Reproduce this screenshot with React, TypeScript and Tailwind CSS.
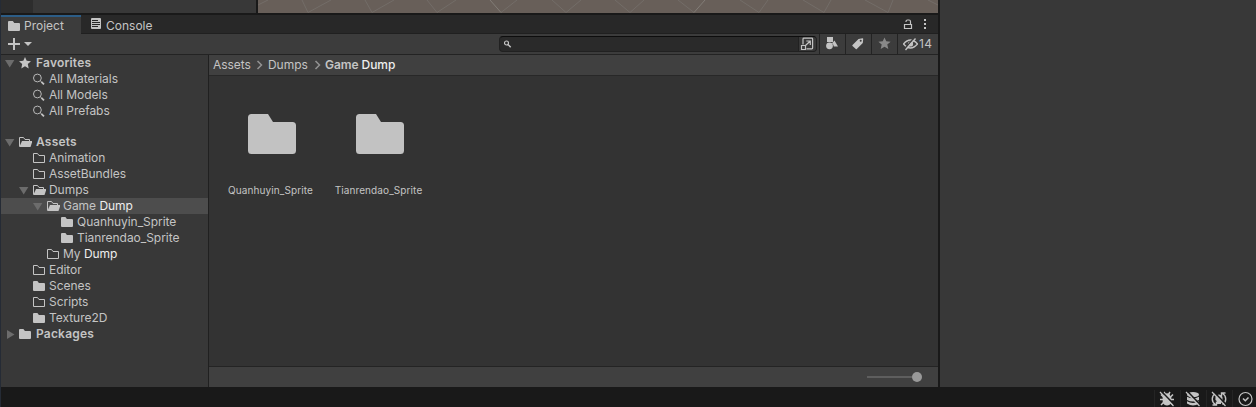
import React from "react";
import clsx from "clsx";

type IconKind = "open" | "outline" | "solid" | "search" | "star";

function TreeIcon({ kind }: { kind: IconKind }) {
  return (
    <svg width="14" height="16" viewBox="0 0 14 16" className="shrink-0" fill="none">
      {kind === "solid" && <path d="M1 4q0-1 1-1h3.4l1.5 2H12q1 0 1 1v6q0 1-1 1H2q-1 0-1-1z" fill="#c4c4c4" />}
      {kind === "outline" && <path d="M1.5 3.5h4l1.5 2h5.5v7h-11z" stroke="#c4c4c4" />}
      {kind === "open" && (
        <>
          <path d="M1.5 12.5v-9h4l1.5 2h4.5v2" stroke="#c4c4c4" />
          <path d="M4 7h10.5l-2 6H1.3z" fill="#c4c4c4" />
        </>
      )}
      {kind === "search" && (
        <>
          <circle cx="5.4" cy="7" r="3.9" stroke="#b8b8b8" />
          <path d="M8.3 9.8l1 1" stroke="#b8b8b8" />
          <path d="M9.4 10.8l2.6 2.5" stroke="#c4c4c4" strokeWidth="1.8" />
        </>
      )}
      {kind === "star" && (
        <path d="M7 2l1.7 3.8 4.3.4-3.2 2.8.9 4.4L7 11.2l-3.7 2.2.9-4.4L1 6.2l4.3-.4z" fill="#c4c4c4" />
      )}
    </svg>
  );
}

interface Row {
  label: React.ReactNode;
  icon: IconKind;
  pad: string;
  arrow?: "down" | "right";
  bold?: boolean;
  selected?: boolean;
}

const favorites: Row[] = [
  { label: "Favorites", icon: "star", pad: "pl-[3px]", arrow: "down", bold: true },
  { label: "All Materials", icon: "search", pad: "pl-[17px]" },
  { label: "All Models", icon: "search", pad: "pl-[17px]" },
  { label: "All Prefabs", icon: "search", pad: "pl-[17px]" },
];

const assets: Row[] = [
  { label: "Assets", icon: "open", pad: "pl-[3px]", arrow: "down", bold: true },
  { label: "Animation", icon: "outline", pad: "pl-[17px]" },
  { label: "AssetBundles", icon: "outline", pad: "pl-[17px]" },
  { label: "Dumps", icon: "open", pad: "pl-[17px]", arrow: "down" },
  { label: <>Game <span className="text-[#eeeeee]">Dump</span></>, icon: "open", pad: "pl-[31px]", arrow: "down", selected: true },
  { label: "Quanhuyin_Sprite", icon: "solid", pad: "pl-[45px]" },
  { label: "Tianrendao_Sprite", icon: "solid", pad: "pl-[45px]" },
  { label: <>My <span className="text-[#eeeeee]">Dump</span></>, icon: "outline", pad: "pl-[31px]" },
  { label: "Editor", icon: "outline", pad: "pl-[17px]" },
  { label: "Scenes", icon: "solid", pad: "pl-[17px]" },
  { label: "Scripts", icon: "outline", pad: "pl-[17px]" },
  { label: "Texture2D", icon: "solid", pad: "pl-[17px]" },
  { label: "Packages", icon: "solid", pad: "pl-[3px]", arrow: "right", bold: true },
];

function TreeRow({ row }: { row: Row }) {
  return (
    <div className={clsx("flex h-4 items-center whitespace-nowrap", row.pad, row.selected && "bg-[#4d4d4d]")}>
      <svg width="14" height="16" viewBox="0 0 14 16" className="shrink-0" fill="#6c6c6c">
        {row.arrow === "down" && <path d="M1 5h9.4L5.7 12.6z" />}
        {row.arrow === "right" && <path d="M3 4l7.5 4.5L3 13z" />}
      </svg>
      <TreeIcon kind={row.icon} />
      <span className={clsx("leading-4", row.bold ? "pl-1 font-semibold tracking-[0.2px]" : "pl-[3px] tracking-[-0.04px]")}>{row.label}</span>
    </div>
  );
}

const sceneLines: { d: string; bright?: boolean }[] = [
  { d: "M0 5L10 0" },
  { d: "M44 0L50 12.5L73 0" },
  { d: "M107 0L114 12.5L136 0" },
  { d: "M169 0L179 12.5L198 0" },
  { d: "M243 12.5L259 0" },
  { d: "M232 0L243 12.5", bright: true },
  { d: "M294 0L308 12.5L323 0" },
  { d: "M357 0L372 12.5L386 0" },
  { d: "M420 0L436 12.5" },
  { d: "M436 12.5L447 0", bright: true },
  { d: "M482 0L501 12.5L510 0" },
  { d: "M545 0L566 12.5L573 0" },
  { d: "M607 0L630 12.5L635 0" },
  { d: "M670 0L680 5" },
];

function Chevron() {
  return (
    <svg width="8" height="10" viewBox="0 0 8 10" fill="none" stroke="#939393" strokeWidth="1.5">
      <path d="M1.5 1l4 4-4 4" />
    </svg>
  );
}

function FolderTile({ name }: { name: string }) {
  return (
    <div className="flex w-[108px] flex-col items-center">
      <svg width="48" height="40" viewBox="0 0 48 40" fill="#c2c2c2">
        <path d="M3.5 0H20l5 8h19.5q3.5 0 3.5 3.5V36.5q0 3.5-3.5 3.5H3.5Q0 40 0 36.5V3.5Q0 0 3.5 0z" />
      </svg>
      <span className="mt-[28px] pr-[3px] text-[10px] leading-4 tracking-[0.1px]">{name}</span>
    </div>
  );
}

function Slash() {
  return (
    <>
      <path d="M2.5 .5l13 13.500" stroke="#191919" strokeWidth="1.6" />
      <path d="M1 1l13.500 14" stroke="#c4c4c4" strokeWidth="1.2" />
    </>
  );
}

function StatusCell({ children }: { children: React.ReactNode }) {
  return (
    <div className="flex h-[18px] w-[26px] items-center border-l border-[#242424] pl-[4px]">
      <svg width="16" height="16" viewBox="0 0 16 16" fill="none" className="shrink-0">
        {children}
      </svg>
    </div>
  );
}

function StatusIcons() {
  return (
    <div className="-mr-[2px] flex h-5 items-center">
      <StatusCell>
        <path d="M5.500 3.500q2.500-2.500 5 0l1.800 3v5q-1.300 3-4.300 3t-4.300-3v-5z" fill="#c4c4c4" />
        <path d="M5 1l1.500 2.500M11 1L9.500 3.500M1 8.500h14M2 3.500L5 6.500M14 3.500L11 6.500M2 14L5 11M14 14L11 11" stroke="#c4c4c4" strokeWidth="1.500" />
        <Slash />
      </StatusCell>
      <StatusCell>
        <ellipse cx="8" cy="3.700" rx="6" ry="2.600" fill="#c4c4c4" />
        <path d="M2 5.800q6 3.200 12 0v3.200q-6 3.200-12 0zM2 10.300q6 3.200 12 0v2.200q-6 4-12 0z" fill="#c4c4c4" />
        <Slash />
      </StatusCell>
      <StatusCell>
        <path d="M4.500 2.500A6.300 6.300 0 0 0 4.500 13.500M11.500 2.500A6.300 6.300 0 0 1 11.500 13.500M1.500 14h4v-3.500M14.500 2h-4v3.500" stroke="#c4c4c4" strokeWidth="1.400" />
        <path d="M8 3.500a3.700 3.700 0 0 1 2 6.800V13H6v-2.700A3.700 3.700 0 0 1 8 3.500z" fill="#c4c4c4" />
        <Slash />
      </StatusCell>
      <StatusCell>
        <circle cx="8.500" cy="8" r="6.500" stroke="#c4c4c4" strokeWidth="1.200" />
        <path d="M6 7.500l2.300 2.300L11.500 6.500" stroke="#c4c4c4" strokeWidth="1.500" />
      </StatusCell>
    </div>
  );
}

function TabBar() {
  return (
    <div className="flex h-[19px] bg-[#282828]">
      <div className="flex w-20 items-center border-t-2 border-[#2c5d87] bg-[#3c3c3c] pl-[7px]">
        <svg width="13" height="12" viewBox="0 0 13 12" fill="#c4c4c4">
          <path d="M0 2q0-1 1-1h3.800l1.500 2H11q1 0 1 1v6q0 1-1 1H1q-1 0-1-1z" />
        </svg>
        <span className="pl-[3px] leading-4">Project</span>
      </div>
      <div className="flex flex-1 items-center border-b border-[#202020] pl-[10px] pt-[3px]">
        <svg width="10" height="12" viewBox="0 0 10 12" className="mb-[3px]">
          <rect y="0" width="10" height="11" rx="1" fill="#c4c4c4" />
          <path d="M1 2.500h6M1 4.500h8M1 6.500h8M1 8.500h6" stroke="#282828" />
        </svg>
        <span className="pl-[5px] leading-4">Console</span>
        <div className="ml-auto mb-[3px] flex items-center gap-[10px] pr-[11px]">
          <svg width="10" height="11" viewBox="0 0 10 11" fill="none" stroke="#c4c4c4">
            <path d="M1.500 5.500h7v4h-7zM3 3V2.500Q3 1 4.500 1h1.500q1.500 0 1.500 1.500v3" strokeWidth="1.200" />
          </svg>
          <svg width="4" height="12" viewBox="0 0 4 12" fill="#c4c4c4">
            <path d="M1 1h2v2H1zM1 5h2v2H1zM1 9h2v2H1z" />
          </svg>
        </div>
      </div>
    </div>
  );
}

function Toolbar() {
  return (
    <div className="flex h-[21px] border-b border-[#232323] bg-[#3c3c3c]">
      <svg width="26" height="20" viewBox="0 0 26 20" className="ml-[7px]" fill="#c4c4c4">
        <path d="M5 4h2v5h5v2H7v5H5v-5H0V9h5z" />
      </svg>
      <svg width="9" height="20" viewBox="0 0 9 20" className="-ml-[10px]" fill="#c4c4c4">
        <path d="M0 8h8L4 12z" />
      </svg>
      <div className="ml-auto mt-[2px] flex h-4 w-[318px] overflow-hidden rounded-[4px] border border-[#212121] border-t-[#0d0d0d] bg-[#2a2a2a]">
        <svg width="16" height="14" viewBox="0 0 16 14" fill="none" stroke="#c4c4c4">
          <circle cx="6.500" cy="6" r="2" strokeWidth="1.200" />
          <path d="M8 7.500l2.700 2.700" strokeWidth="1.500" />
        </svg>
        <div className="ml-auto flex w-[18px] items-center border-l border-[#212121] bg-[#383838]">
          <svg width="14" height="14" viewBox="0 0 14 14" fill="none" stroke="#c4c4c4" className="ml-[1px]">
            <path d="M3 7.500V2q0-.8.800-.8h8q.8 0 .8.800v9q0 .8-.8.800H6.500" strokeWidth="1.200" />
            <path d="M1.500 8.500h4v4h-4zM5.500 8.500l4.500-4.300M6.300 4h4v4" strokeWidth="1.200" />
          </svg>
        </div>
      </div>
      <div className="ml-[2px] flex">
        <div className="w-[26px] border-l border-[#232323] pl-[5px] pt-[2px]">
          <svg width="15" height="15" viewBox="0 0 15 15" fill="#c4c4c4">
            <path d="M2 1h6v5H2zM9.500 4.500l3.500 6H8.800Q8.500 8 7 7.300z" />
            <circle cx="4.500" cy="9.800" r="3.400" />
          </svg>
        </div>
        <div className="w-[26px] border-l border-[#232323] pl-[6px] pt-[3px]">
          <svg width="13" height="13" viewBox="0 0 13 13">
            <path d="M0.500 8L6.500 2l4-.8q.8 0 .7.800L10.800 6l-6 6q-.5.5-1 0L.5 9q-.5-.5 0-1z" fill="#c4c4c4" />
            <circle cx="8.700" cy="3.700" r="1" fill="#3c3c3c" />
          </svg>
        </div>
        <div className="w-[26px] border-l border-[#232323] pl-[6px] pt-[3px]">
          <svg width="13" height="13" viewBox="0 0 14 14" fill="#888888">
            <path d="M7 .5l1.900 4.200 4.700.4-3.600 3 1.100 4.700L7 10.500l-4.100 2.300L4 8.100l-3.600-3 4.700-.4z" />
          </svg>
        </div>
        <div className="flex w-[41px] items-center border-l border-[#232323] pl-[5px]">
          <svg width="15" height="14" viewBox="0 0 15 14" fill="none" stroke="#c4c4c4" className="shrink-0">
            <path d="M.5 7Q4 3 7.500 3T14.500 7Q11 11 7.500 11T.5 7z" strokeWidth="1.500" />
            <circle cx="7.500" cy="7" r="2.600" fill="#c4c4c4" stroke="none" />
            <path d="M1.500 12L11 1" stroke="#3c3c3c" strokeWidth="1.400" />
            <path d="M2.500 13L12.500 1.500" strokeWidth="1.400" />
          </svg>
          <span className="pl-[1px] leading-4 tracking-[0.3px]">14</span>
        </div>
      </div>
    </div>
  );
}

function ProjectPanel() {
  return (
    <div className="flex h-[372px] flex-col">
      <TabBar />
      <Toolbar />
      <div className="flex min-h-0 flex-1">
        <div className="flex w-[208px] flex-col gap-[15px] border-r border-[#202020] bg-[#383838]">
          <div>{favorites.map((row, i) => <TreeRow key={i} row={row} />)}</div>
          <div>{assets.map((row, i) => <TreeRow key={i} row={row} />)}</div>
        </div>
        <div className="flex flex-1 flex-col bg-[#333333]">
          <div className="flex h-[21px] items-center border-b border-[#282828] bg-[#404040] pl-1">
            <span className="w-[43px] tracking-[-0.04px]">Assets</span>
            <Chevron />
            <span className="ml-1 w-[43px] tracking-[-0.04px]">Dumps</span>
            <span className="ml-[3px] flex"><Chevron /></span>
            <span className="ml-[3px] font-semibold tracking-[-0.05px]">
              Game <span className="font-medium text-[#eeeeee]">Dump</span>
            </span>
          </div>
          <div className="flex flex-1 pl-[9px] pt-[38px]">
            <FolderTile name="Quanhuyin_Sprite" />
            <FolderTile name="Tianrendao_Sprite" />
          </div>
          <div className="flex h-[21px] items-center justify-end border-t border-[#242424] bg-[#404040] pr-4">
            <div className="h-[2px] w-[45px] bg-[#5e5e5e]" />
            <div className="size-[10px] rounded-full bg-[#999999]" />
          </div>
        </div>
      </div>
    </div>
  );
}

export default function App() {
  return (
    <div className="flex h-[407px] w-[1256px] flex-col overflow-hidden border-l border-[#252b35] bg-[#191919] font-['Inter','Liberation_Sans',sans-serif] text-[12px] leading-4 text-[#c4c4c4]">
      <div className="flex h-[387px]">
        <div className="flex w-[937px] flex-col">
          <div className="flex h-[15px] border-b-2 border-[#191919]">
            <div className="w-8 bg-[#2d2d2d]" />
            <div className="w-[223px] bg-[#383838]" />
            <div className="w-[2px] bg-[#191919]" />
            <svg width="680" height="13" viewBox="0 0 680 13" fill="none" className="bg-[#685f59]">
              {sceneLines.map((line, i) => (
                <path key={i} d={line.d} stroke={line.bright ? "#827d77" : "#736d68"} />
              ))}
            </svg>
          </div>
          <ProjectPanel />
        </div>
        <div className="w-[2px] bg-[#191919]" />
        <div className="flex-1 bg-[#383838]" />
      </div>
      <div className="flex h-5 items-center justify-end pt-[3px]">
        <StatusIcons />
      </div>
    </div>
  );
}
